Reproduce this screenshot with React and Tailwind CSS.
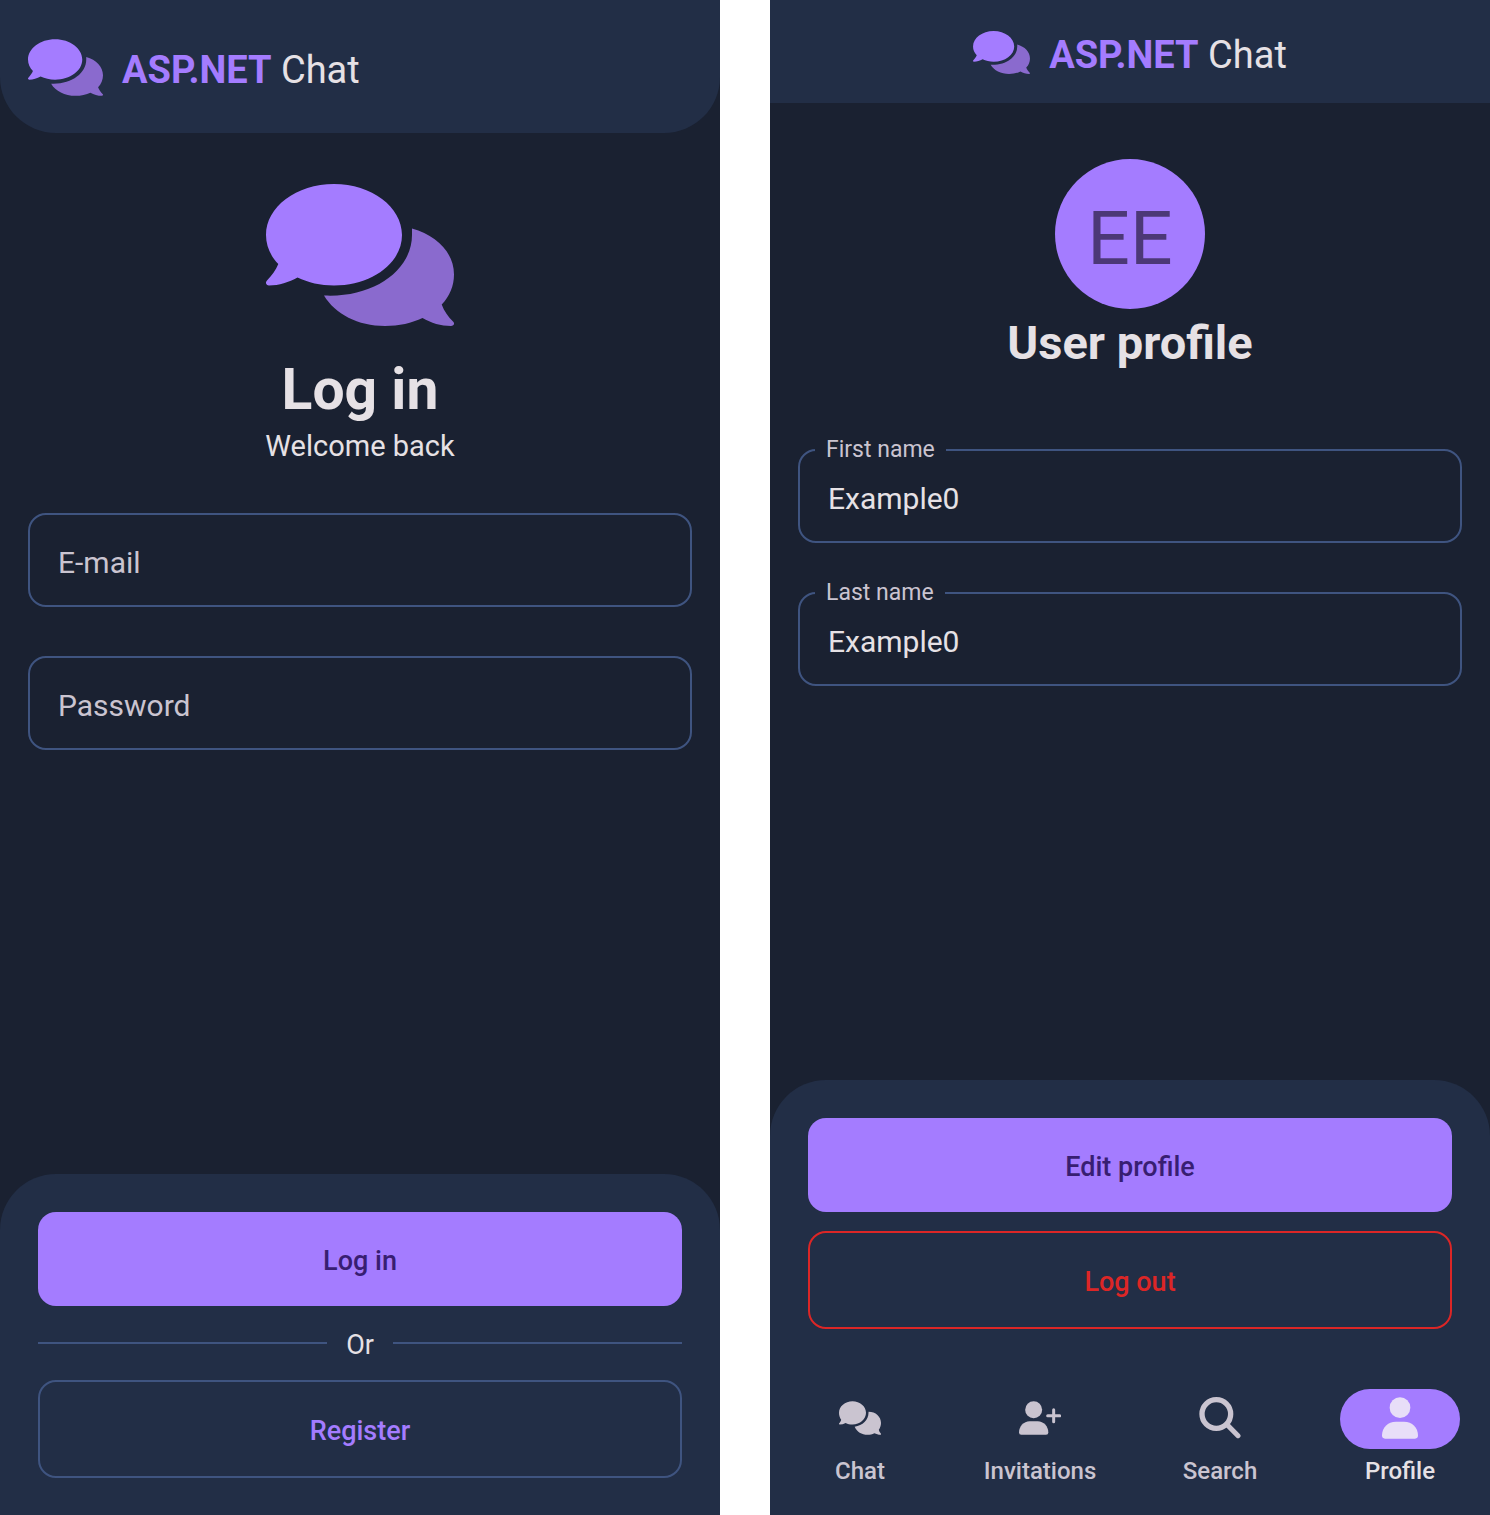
import React from "react";

function Bubbles({ className }) {
  return (
    <svg className={className} viewBox="0 0 188 142" aria-hidden="true">
      <path
        fill="#a47cff"
        d="M68 0C105.600 0 136 22.800 136 51S105.600 101.500 68 101.500C54.500 101.500 42 98.500 31.500 93.500C23 98 13 101.500 3 101.500C0 101.500 -1 98.500 1 96.500C6 91.500 10 85.500 12.300 80C4.500 72 0 62 0 51C0 22.800 30.400 0 68 0Z"
      />
      <path
        fill="#8a6ace"
        d="M146 44.500C171 51.500 188 69 188 90.500C188 102 183.500 112.500 175.700 120.500C178 127 182 132.500 187 137.500C189 139.500 188 142 185 142C175 142 165 139 156.500 134C146 139 133 142 119 142C92 142 69 130 58 111.500C108 114 146 86 146 51Z"
      />
    </svg>
  );
}

function ChatIcon() {
  return (
    <svg className="h-[34px] w-[42px]" viewBox="0 0 126 101" fill="currentColor" aria-hidden="true">
      <path d="M40.500 0C63 0 81 15.500 81 35S63 70 40.500 70C33 70 26 68.500 20 65.500C14 68.500 8 70 2 70C0 70 -0.500 68 0.500 66.500C4 63 5.500 60 6.500 56C2.500 50 0 43 0 35C0 15.500 18 0 40.500 0Z" />
      <path d="M88.500 31.500C110 31.500 126 46 126 65.500C126 73 123.500 80 119.500 86C120.500 90.500 122 93.500 125.500 97C126.500 99 126 101 124 101C118 101 112 99 106 96.500C100 99.500 93 101 86 101C68 101 53 91 47 76.500C72 74 90 56 88.500 31.500Z" />
    </svg>
  );
}

function InviteIcon() {
  return (
    <svg className="h-[34px] w-[42px]" viewBox="0 0 126 101" fill="currentColor" aria-hidden="true">
      <circle cx="44" cy="25.500" r="25.500" />
      <path d="M32 60H56C74 60 88 75 88 94Q88 101 81 101H7Q0 101 0 94C0 75 14 60 32 60Z" />
      <path d="M104 26V62M86 44H122" fill="none" stroke="currentColor" strokeWidth="9" strokeLinecap="round" />
    </svg>
  );
}

function SearchIcon() {
  return (
    <svg className="size-[42px]" viewBox="0 0 126 126" fill="none" stroke="currentColor" aria-hidden="true">
      <circle cx="52" cy="51" r="43" strokeWidth="16" />
      <path d="M83 82L117 116" strokeWidth="15" strokeLinecap="round" />
    </svg>
  );
}

function PersonIcon() {
  return (
    <svg className="h-[42px] w-9" viewBox="0 0 108 124" fill="currentColor" aria-hidden="true">
      <circle cx="54" cy="31" r="31" />
      <path d="M42 73H66C91 73 108 91 108 114Q108 124 99 124H9Q0 124 0 114C0 91 17 73 42 73Z" />
    </svg>
  );
}

function Brand() {
  return (
    <p className="text-[38px] leading-12 whitespace-nowrap">
      <span className="font-bold text-[#a47cff]">ASP.NET</span> Chat
    </p>
  );
}

function PlainField({ label, type }) {
  return (
    <input
      type={type}
      aria-label={label}
      placeholder={label}
      className="h-[94px] w-full rounded-[18px] border-2 border-[#3f5480] bg-transparent px-7 pt-1 text-[30px] outline-none placeholder:text-[#cac4d0]"
    />
  );
}

function OutlinedField({ id, label, value }) {
  return (
    <fieldset className="w-full rounded-[18px] border-2 border-[#3f5480] pl-[15px]">
      <legend className="px-[11px] text-[23px] leading-[26px] text-[#cac4d0]">
        <label htmlFor={id}>{label}</label>
      </legend>
      <input
        id={id}
        type="text"
        defaultValue={value}
        className="block h-[78px] w-full bg-transparent pr-7 pb-2 pl-[13px] text-[30px] outline-none"
      />
    </fieldset>
  );
}

function Button({ children, className }) {
  return (
    <button type="button" className={`w-full rounded-[18px] pt-1 text-[27px] font-medium ${className}`}>
      {children}
    </button>
  );
}

function LoginScreen() {
  return (
    <section className="flex min-h-screen flex-col bg-[#1a2131]">
      <header className="flex items-end gap-[19px] rounded-b-[56px] bg-[#222e46] px-7 pt-[39px] pb-[37px]">
        <Bubbles className="h-[57px] w-[75px]" />
        <div className="pb-0.5">
          <Brand />
        </div>
      </header>
      <main className="flex flex-1 flex-col items-center px-7 pt-[51px]">
        <Bubbles className="h-[142px] w-[188px]" />
        <h1 className="mt-7 text-[57px] leading-[72px] font-bold">Log in</h1>
        <p className="text-[29px] leading-10">Welcome back</p>
        <form className="mt-[47px] flex w-full flex-col gap-[49px]">
          <PlainField label="E-mail" type="email" />
          <PlainField label="Password" type="password" />
        </form>
      </main>
      <footer className="rounded-t-[56px] bg-[#222e46] px-[38px] pt-[38px] pb-[37px]">
        <Button className="h-[94px] bg-[#a47cff] text-[#381e72]">Log in</Button>
        <div className="flex h-[74px] items-center gap-[19px]">
          <span className="h-0.5 flex-1 bg-[#3f5480]" />
          <span className="pt-1 text-[27px]">Or</span>
          <span className="h-0.5 flex-1 bg-[#3f5480]" />
        </div>
        <Button className="h-[98px] border-2 border-[#3f5480] text-[#a47cff]">Register</Button>
      </footer>
    </section>
  );
}

const TABS = [
  { label: "Chat", Icon: ChatIcon },
  { label: "Invitations", Icon: InviteIcon },
  { label: "Search", Icon: SearchIcon },
  { label: "Profile", Icon: PersonIcon, active: true },
];

function ProfileScreen() {
  return (
    <section className="flex min-h-screen flex-col bg-[#1a2131]">
      <header className="flex justify-center gap-[19px] bg-[#222e46] pt-[31px] pb-6">
        <Bubbles className="h-[43px] w-[57px]" />
        <Brand />
      </header>
      <main className="flex flex-1 flex-col items-center px-7 pt-14">
        <div className="flex size-[150px] items-center justify-center rounded-full bg-[#a47cff] pt-2 text-[75px] text-[#4c3877]">
          EE
        </div>
        <h1 className="mt-1 text-[47px] leading-15 font-bold">User profile</h1>
        <form className="mt-16 flex w-full flex-col gap-[37px]">
          <OutlinedField id="first-name" label="First name" value="Example0" />
          <OutlinedField id="last-name" label="Last name" value="Example0" />
        </form>
      </main>
      <footer className="rounded-t-[56px] bg-[#222e46] pt-[38px] pb-7">
        <div className="flex flex-col gap-[19px] px-[38px]">
          <Button className="h-[94px] bg-[#a47cff] text-[#381e72]">Edit profile</Button>
          <Button className="h-[98px] border-2 border-[#dc2626] text-[#dc2626]">Log out</Button>
        </div>
        <nav className="mt-15 grid grid-cols-4">
          {TABS.map(({ label, Icon, active }) => (
            <a
              key={label}
              href={`#${label.toLowerCase()}`}
              aria-current={active ? "page" : undefined}
              className={`flex flex-col items-center gap-2 pb-0.5 text-[24px] leading-7 font-medium ${active ? "text-[#e6e1e5]" : "text-[#cac4d0]"}`}
            >
              <span
                className={`flex h-15 w-30 items-center justify-center rounded-full pb-0.5 ${active ? "bg-[#a47cff] text-[#e8def8]" : ""}`}
              >
                <Icon />
              </span>
              {label}
            </a>
          ))}
        </nav>
      </footer>
    </section>
  );
}

export default function App() {
  return (
    <div className="grid min-h-screen grid-cols-2 gap-[50px] bg-white font-[Roboto,sans-serif] text-[#e6e1e5]">
      <LoginScreen />
      <ProfileScreen />
    </div>
  );
}
